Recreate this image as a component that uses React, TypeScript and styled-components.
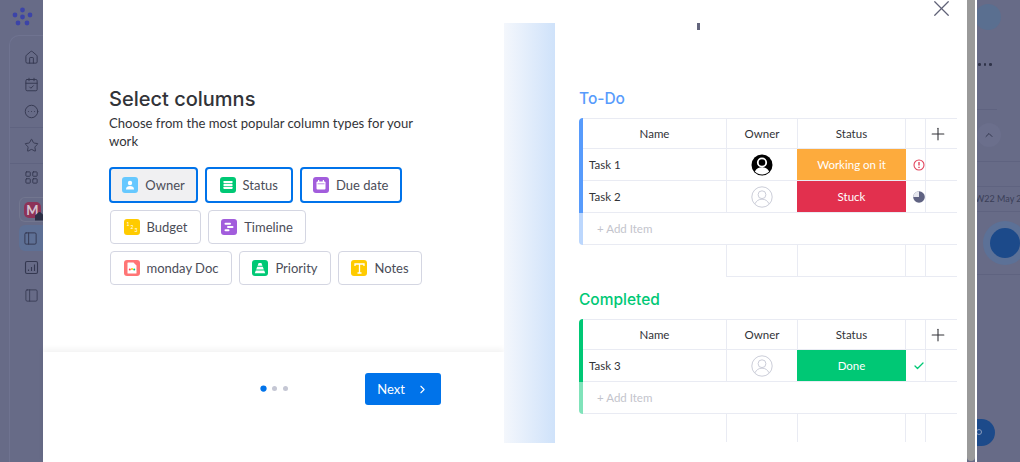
import React from 'react';
import styled, { createGlobalStyle } from 'styled-components';
import {
  Home,
  CalendarCheck,
  CircleEllipsis,
  Star,
  LayoutGrid,
  PanelLeft,
  X,
  Plus,
  ChevronRight,
  ChevronUp,
  Check,
} from 'lucide-react';

const GlobalStyle = createGlobalStyle`
  html, body {
    margin: 0;
    padding: 0;
    width: 1020px;
    height: 462px;
    overflow: hidden;
    font-family: "Lato", "Liberation Sans", sans-serif;
  }
  * { box-sizing: border-box; }
`;

const Page = styled.div`
  display: flex;
  width: 1020px;
  height: 462px;
  overflow: hidden;
  background: #676b87;
`;

const Sidebar = styled.nav`
  width: 43px;
  flex: none;
  display: flex;
  flex-direction: column;
  color: #343850;
`;

const Logo = styled.div`
  height: 35px;
  padding: 7px 0 0 12px;
`;

const SidePanel = styled.div`
  flex: 1;
  margin-left: 9px;
  border-top: 1px solid #6f7390;
  border-left: 1px solid #6f7390;
  border-top-left-radius: 10px;
  display: flex;
  flex-direction: column;
`;

const SideGroup = styled.div<{ $compact?: boolean }>`
  height: ${(p) => (p.$compact ? '36px' : '92px')};
  padding-top: ${(p) => (p.$compact ? '4px' : '8px')};
  border-bottom: 1px solid #5f6380;
`;

const SideList = styled.div`
  display: flex;
  flex-direction: column;
  gap: 3px;
  & > :last-child {
    margin-top: -1px;
  }
`;

const SideItem = styled.div<{ $active?: boolean; $tile?: boolean; $tall?: boolean }>`
  height: ${(p) => (p.$tile ? '25px' : p.$tall ? '27px' : '26px')};
  margin-top: ${(p) => (p.$tile ? '4px' : '0')};
  margin-left: ${(p) => (p.$active || p.$tile ? '9px' : '0')};
  padding-left: ${(p) => (p.$active || p.$tile ? '4px' : '14px')};
  display: flex;
  align-items: center;
  background: ${(p) => (p.$active ? '#5e7095' : 'transparent')};
  border-radius: 6px 0 0 6px;
  border: ${(p) => (p.$tile ? '1px solid #72768f' : 'none')};
  border-right: none;
`;

const Tile = styled.div`
  position: relative;
  width: 17px;
  height: 16px;
  border-radius: 5px;
  background: #8d3358;
  color: #d3c3cf;
  font-size: 13px;
  font-weight: 700;
  line-height: 16px;
  text-align: center;
`;

const TileBadge = styled.span`
  position: absolute;
  right: -3px;
  bottom: -3px;
  width: 9px;
  height: 9px;
  background: #2c3046;
  clip-path: polygon(50% 0, 100% 45%, 100% 100%, 0 100%, 0 45%);
`;

const Modal = styled.main`
  position: relative;
  width: 924px;
  flex: none;
  display: flex;
  background: #fff;
`;

const LeftPane = styled.section`
  width: 461px;
  flex: none;
  display: flex;
  flex-direction: column;
`;

const Intro = styled.div`
  height: 352px;
  padding: 87px 70px 0 66px;
`;

const Title = styled.h1`
  margin: 0;
  font-family: "Inter", "Liberation Sans", sans-serif;
  font-size: 20px;
  line-height: 24px;
  font-weight: 500;
  color: #323338;
`;

const Subtitle = styled.p`
  margin: 3px 0 17px;
  font-size: 13.1px;
  line-height: 18px;
  color: #323338;
`;

const ChipRows = styled.div`
  display: flex;
  flex-direction: column;
  gap: 6px;
`;

const ChipRow = styled.div<{ $indent?: boolean }>`
  display: flex;
  gap: 7px;
  padding-left: ${(p) => (p.$indent ? '1px' : '0')};
  margin-top: ${(p) => (p.$indent ? '1px' : '0')};
`;

const Chip = styled.div<{ $selected?: boolean; $pressed?: boolean; $width: number }>`
  width: ${(p) => p.$width}px;
  height: ${(p) => (p.$selected ? 36 : 34)}px;
  display: flex;
  align-items: center;
  justify-content: center;
  gap: 7px;
  border-radius: 4px;
  border: ${(p) => (p.$selected ? '2px solid #0073ea' : '1.5px solid #d4d6e2')};
  background: ${(p) => (p.$pressed ? '#f0f0f2' : '#fff')};
  font-size: 13px;
  color: #4b4d58;
`;

const ChipIcon = styled.span<{ $color: string }>`
  width: 16px;
  height: 16px;
  flex: none;
  border-radius: 3px;
  background: ${(p) => p.$color};
  display: flex;
  align-items: center;
  justify-content: center;
`;

const Footer = styled.div`
  flex: 1;
  display: flex;
  align-items: flex-start;
  padding: 21px 0 0 218px;
  box-shadow: 0 -3px 6px rgba(0, 0, 0, 0.05);
`;

const Dots = styled.div`
  display: flex;
  gap: 6px;
  margin-top: 13px;
  width: 104px;
`;

const Dot = styled.span<{ $on?: boolean }>`
  width: 5px;
  height: 5px;
  border-radius: 50%;
  background: ${(p) => (p.$on ? '#0073ea' : '#c5c7d4')};
  transform: ${(p) => (p.$on ? 'scale(1.25)' : 'none')};
`;

const NextButton = styled.button`
  width: 76px;
  height: 32px;
  display: flex;
  align-items: center;
  justify-content: center;
  gap: 11px;
  border: none;
  border-radius: 3px;
  background: #0073ea;
  color: #fff;
  font: inherit;
  font-size: 13px;
`;

const RightPane = styled.section`
  position: relative;
  flex: 1;
  display: flex;
  background: #fff;
`;

const Strip = styled.div`
  width: 51px;
  height: 420px;
  margin-top: 23px;
  flex: none;
  background: linear-gradient(90deg, #f4f7fc 0%, #cfe2fa 100%);
`;

const Boards = styled.div`
  width: 378px;
  margin-left: 24px;
  padding-top: 89px;
  display: flex;
  flex-direction: column;
`;

const GroupTitle = styled.h2<{ $color: string }>`
  margin: 0 0 9px;
  height: 20px;
  font-family: "Inter", "Liberation Sans", sans-serif;
  font-size: 15.5px;
  line-height: 20px;
  font-weight: 500;
  color: ${(p) => p.$color};
`;

const Group = styled.div`
  margin-bottom: 13px;
`;

const TableCard = styled.div`
  display: flex;
`;

const Edge = styled.div`
  width: 4px;
  flex: none;
  display: flex;
  flex-direction: column;
  align-self: flex-start;
  border-radius: 4px 0 0 4px;
  overflow: hidden;
`;

const EdgePart = styled.span<{ $color: string; $height: number }>`
  height: ${(p) => p.$height}px;
  background: ${(p) => p.$color};
`;

const Rows = styled.div`
  flex: 1;
`;

const Row = styled.div<{ $height?: number }>`
  display: grid;
  grid-template-columns: 144px 71px 108px 20px 31px;
  height: ${(p) => p.$height ?? 32}px;
`;

const Cell = styled.div<{ $left?: boolean; $noRight?: boolean; $top?: boolean }>`
  display: flex;
  align-items: center;
  justify-content: ${(p) => (p.$left ? 'flex-start' : 'center')};
  padding-left: ${(p) => (p.$left ? '6px' : '0')};
  font-size: 11.5px;
  color: #323338;
  border-right: ${(p) => (p.$noRight ? 'none' : '1.5px solid #e9ebf3')};
  border-bottom: 1.5px solid #e9ebf3;
  border-top: ${(p) => (p.$top ? '1.5px solid #e9ebf3' : 'none')};
`;

const StatusCell = styled.div<{ $fill: string }>`
  margin-left: -1px;
  display: flex;
  align-items: center;
  justify-content: center;
  font-size: 11.5px;
  color: #fff;
  background: ${(p) => p.$fill};
  border-bottom: 1.5px solid #e9ebf3;
`;

const MarkCell = styled(Cell)`
  justify-content: flex-start;
  padding-left: 7px;
  overflow: hidden;
`;

const PlusCell = styled(Cell)`
  justify-content: flex-start;
  padding-left: 2px;
`;

const AddItem = styled.div`
  height: 32px;
  padding: 0 0 0 14px;
  display: flex;
  align-items: center;
  font-size: 11.5px;
  color: #c3c4cc;
  border-bottom: 1.5px solid #e9ebf3;
`;

const Gap = styled.div<{ $bottom?: boolean; $noRight?: boolean }>`
  border-right: ${(p) => (p.$noRight ? 'none' : '1.5px solid #e9ebf3')};
  border-bottom: ${(p) => (p.$bottom ? '1.5px solid #e9ebf3' : 'none')};
`;

const CloseButton = styled.span`
  position: absolute;
  top: -5px;
  right: 12px;
  color: #5f6176;
  display: flex;
`;

const Tick = styled.span`
  position: absolute;
  top: 23px;
  left: 193px;
  width: 3px;
  height: 7px;
  background: #63657c;
`;

const Scrollbar = styled.div`
  width: 8px;
  flex: none;
  height: 461px;
  background: #9a9a9a;
  border-radius: 0 0 4px 4px;
`;

const ScrollEdge = styled.div`
  width: 2px;
  flex: none;
  background: #fff;
`;

const Rail = styled.aside`
  position: relative;
  flex: 1;
  overflow: hidden;
  color: #33374f;
  display: flex;
  flex-direction: column;
`;

const Avatar = styled.div`
  width: 26px;
  height: 26px;
  margin: 4px 0 0 -2px;
  flex: none;
  border-radius: 50%;
  background: #5a6f90;
`;

const More = styled.div`
  margin: 33px 0 0 1px;
  height: 2px;
  display: flex;
  gap: 3px;
`;

const MoreDot = styled.span`
  width: 2.5px;
  height: 2.5px;
  border-radius: 50%;
  background: #2f3349;
`;

const RailLine = styled.div<{ $top: number; $width?: number }>`
  margin-top: ${(p) => p.$top}px;
  width: ${(p) => p.$width ?? 43}px;
  height: 1px;
  flex: none;
  background: #5f6380;
`;

const Collapse = styled.div`
  margin-top: 13px;
  width: 24px;
  height: 24px;
  flex: none;
  border-radius: 50%;
  background: #6b6f8c;
  display: flex;
  align-items: center;
  justify-content: center;
`;

const WeekLabel = styled.div`
  height: 24px;
  margin-left: -2px;
  font-size: 9px;
  line-height: 24px;
  white-space: nowrap;
  color: #3a3e57;
`;

const Halo = styled.div`
  margin: 9px 0 0 6px;
  width: 44px;
  height: 44px;
  flex: none;
  border-radius: 50%;
  background: #5c7197;
  display: flex;
  align-items: center;
  justify-content: center;
`;

const HaloCore = styled.div`
  width: 30px;
  height: 30px;
  border-radius: 50%;
  background: #1c4a8a;
`;

const Fab = styled.div`
  position: absolute;
  left: -15px;
  top: 419px;
  width: 33px;
  height: 27px;
  padding: 10px 0 0 14px;
  border-radius: 14px;
  background: #1c4a8a;
`;

const FabRing = styled.span`
  display: block;
  width: 6px;
  height: 6px;
  border-radius: 50%;
  border: 1px solid #8a9cbc;
`;

const MondayLogo = () => (
  <svg width="21" height="20" viewBox="0 0 21 20" fill="#3c44a8">
    <circle cx="10.5" cy="3" r="2.4" />
    <circle cx="3" cy="8" r="2.4" />
    <circle cx="18" cy="8" r="2.4" />
    <circle cx="10.5" cy="10" r="2.4" />
    <circle cx="6" cy="16" r="2.4" />
    <circle cx="15" cy="16" r="2.4" />
  </svg>
);

const ChartBox = () => (
  <svg width="15" height="15" viewBox="0 0 15 15" fill="none" stroke="currentColor" strokeWidth="1.1">
    <rect x="1.500" y="1.500" width="12" height="12" rx="1.500" />
    <path d="M4.500 11V9.500M7.500 11V7M10.500 11V4.500" />
  </svg>
);

const UserFilled = () => (
  <svg width="22" height="22" viewBox="0 0 22 22">
    <circle cx="11" cy="11" r="10.5" fill="#000" />
    <circle cx="11" cy="8.5" r="4.2" fill="none" stroke="#fff" strokeWidth="1.8" />
    <path d="M3.8 17.5c1.6-3 4-4.2 7.2-4.2s5.6 1.2 7.2 4.2c-2 1.9-4.4 3-7.2 3s-5.2-1.1-7.2-3z" fill="#fff" />
  </svg>
);

const UserEmpty = () => (
  <svg width="22" height="22" viewBox="0 0 22 22" fill="none" stroke="#c5c7d4" strokeWidth="0.9">
    <circle cx="11" cy="11" r="10.2" />
    <circle cx="11" cy="8.7" r="3.9" />
    <path d="M4 17.8c1.3-3 3.8-4.6 7-4.6s5.7 1.6 7 4.6" />
  </svg>
);

const AlertMark = () => (
  <svg width="12" height="12" viewBox="0 0 12 12" fill="none" stroke="#e2445c" strokeWidth="1.1">
    <circle cx="6" cy="6" r="5" />
    <path d="M6 3v3.600M6 7.800v1.100" strokeWidth="1.400" />
  </svg>
);

const PieMark = () => (
  <svg width="12" height="12" viewBox="0 0 12 12">
    <circle cx="6" cy="6" r="5.8" fill="#5f6282" />
    <path d="M6 6V0.2A5.8 5.8 0 0 0 0.2 6z" fill="#e6e7ee" />
  </svg>
);

const ownerGlyph = (
  <svg width="10" height="10" viewBox="0 0 10 10" fill="#fff">
    <circle cx="5" cy="3" r="2.2" />
    <path d="M1 9.500c0-2.400 1.800-3.400 4-3.400s4 1 4 3.400z" />
  </svg>
);
const statusGlyph = (
  <svg width="10" height="10" viewBox="0 0 10 10" fill="#fff">
    <rect x="0.5" y="1" width="9" height="2.2" rx="0.4" />
    <rect x="0.5" y="3.9" width="9" height="2.2" rx="0.4" />
    <rect x="0.5" y="6.8" width="9" height="2.2" rx="0.4" />
  </svg>
);
const dateGlyph = (
  <svg width="10" height="10" viewBox="0 0 10 10" fill="#fff">
    <rect x="0.5" y="1.5" width="9" height="8" rx="1" />
    <rect x="2" y="0" width="1.2" height="2.5" />
    <rect x="6.8" y="0" width="1.2" height="2.5" />
    <rect x="1.5" y="3.5" width="7" height="0.7" fill="#a25ddc" />
  </svg>
);
const budgetGlyph = (
  <svg width="14" height="14" viewBox="0 0 14 14" fill="#fff" fontSize="5" fontFamily="Lato, sans-serif">
    <text x="1.500" y="5.500">1</text>
    <text x="5.500" y="8.500">2</text>
    <text x="9.500" y="11.500">3</text>
  </svg>
);
const timelineGlyph = (
  <svg width="10" height="10" viewBox="0 0 10 10" fill="#fff">
    <rect x="0.5" y="0.8" width="6.5" height="2" rx="1" />
    <rect x="3" y="4" width="6.5" height="2" rx="1" />
    <rect x="0.5" y="7.2" width="5" height="2" rx="1" />
  </svg>
);
const docGlyph = (
  <svg width="10" height="12" viewBox="0 0 10 12">
    <path d="M0.5 1a.6.6 0 0 1 .6-.6h5.400l3 3v7.600a.6.6 0 0 1-.6.6H1.100a.6.6 0 0 1-.6-.6z" fill="#fff" />
    <circle cx="2.8" cy="7.600" r="1" fill="#ff3d57" />
    <circle cx="5" cy="7" r="1" fill="#ffcb00" />
    <circle cx="7.200" cy="7.600" r="1" fill="#00c875" />
  </svg>
);
const priorityGlyph = (
  <svg width="12" height="12" viewBox="0 0 12 12" fill="#fff">
    <path d="M4.600 1h2.800l1 2.800H3.600z" />
    <path d="M3.200 4.700h5.600l1 2.800H2.200z" />
    <path d="M1.800 8.400h8.400l1 2.800H.8z" />
  </svg>
);
const notesGlyph = (
  <svg width="11" height="11" viewBox="0 0 11 11" fill="none" stroke="#fff" strokeWidth="1.3">
    <path d="M1 3V1h9v2M5.500 1v9M3.500 10h4" />
  </svg>
);

const chipRows = [
  [
    { label: 'Owner', color: '#66c8ff', glyph: ownerGlyph, width: 89, selected: true, pressed: true },
    { label: 'Status', color: '#00c875', glyph: statusGlyph, width: 87.5, selected: true },
    { label: 'Due date', color: '#a25ddc', glyph: dateGlyph, width: 102.5, selected: true },
  ],
  [
    { label: 'Budget', color: '#ffcb00', glyph: budgetGlyph, width: 91 },
    { label: 'Timeline', color: '#a25ddc', glyph: timelineGlyph, width: 98 },
  ],
  [
    { label: 'monday Doc', color: '#ff7575', glyph: docGlyph, width: 122 },
    { label: 'Priority', color: '#00c875', glyph: priorityGlyph, width: 92 },
    { label: 'Notes', color: '#ffcb00', glyph: notesGlyph, width: 84 },
  ],
];

type Task = {
  name: string;
  owner: 'filled' | 'empty';
  status: string;
  fill: string;
  mark: React.ReactNode;
};

const todo: Task[] = [
  { name: 'Task 1', owner: 'filled', status: 'Working on it', fill: '#fdab3d', mark: <AlertMark /> },
  { name: 'Task 2', owner: 'empty', status: 'Stuck', fill: '#e2304e', mark: <PieMark /> },
];

const done: Task[] = [
  { name: 'Task 3', owner: 'empty', status: 'Done', fill: '#00c875', mark: <Check size={12} strokeWidth={2.6} color="#00c875" /> },
];

const Board = ({
  title,
  color,
  soft,
  tasks,
  closed,
}: {
  title: string;
  color: string;
  soft: string;
  tasks: Task[];
  closed: boolean;
}) => (
  <Group>
    <GroupTitle $color={color}>{title}</GroupTitle>
    <TableCard>
      <Edge>
        <EdgePart $color={color} $height={31 + tasks.length * 32} />
        <EdgePart $color={soft} $height={32} />
      </Edge>
      <Rows>
        <Row $height={31}>
          <Cell $top>Name</Cell>
          <Cell $top>Owner</Cell>
          <Cell $top>Status</Cell>
          <Cell $top />
          <PlusCell $top $noRight>
            <Plus size={20} strokeWidth={1.3} color="#323338" />
          </PlusCell>
        </Row>
        {tasks.map((task) => (
          <Row key={task.name}>
            <Cell $left>{task.name}</Cell>
            <Cell>{task.owner === 'filled' ? <UserFilled /> : <UserEmpty />}</Cell>
            <StatusCell $fill={task.fill}>{task.status}</StatusCell>
            <MarkCell>{task.mark}</MarkCell>
            <Cell $noRight />
          </Row>
        ))}
        <AddItem>+ Add Item</AddItem>
        <Row $height={closed ? 32 : 28}>
          <Gap />
          <Gap $bottom={closed} />
          <Gap $bottom={closed} />
          <Gap $bottom={closed} />
          <Gap $bottom={closed} $noRight />
        </Row>
      </Rows>
    </TableCard>
  </Group>
);

const App = () => (
  <Page>
    <GlobalStyle />
    <Sidebar>
      <Logo>
        <MondayLogo />
      </Logo>
      <SidePanel>
        <SideGroup>
          <SideItem $tall><Home size={15} strokeWidth={1.5} /></SideItem>
          <SideItem $tall><CalendarCheck size={15} strokeWidth={1.5} /></SideItem>
          <SideItem $tall><CircleEllipsis size={15} strokeWidth={1.5} /></SideItem>
        </SideGroup>
        <SideGroup $compact>
          <SideItem $tall><Star size={15} strokeWidth={1.5} /></SideItem>
        </SideGroup>
        <SideList>
          <SideItem><LayoutGrid size={15} strokeWidth={1.5} /></SideItem>
          <SideItem $tile>
            <Tile>M<TileBadge /></Tile>
          </SideItem>
          <SideItem $active><PanelLeft size={15} strokeWidth={1.5} /></SideItem>
          <SideItem><ChartBox /></SideItem>
          <SideItem><PanelLeft size={15} strokeWidth={1.3} /></SideItem>
        </SideList>
      </SidePanel>
    </Sidebar>

    <Modal>
      <LeftPane>
        <Intro>
          <Title>Select columns</Title>
          <Subtitle>Choose from the most popular column types for your work</Subtitle>
          <ChipRows>
            {chipRows.map((row, i) => (
              <ChipRow key={row[0].label} $indent={i > 0}>
                {row.map((chip) => (
                  <Chip key={chip.label} $width={chip.width} $selected={chip.selected} $pressed={chip.pressed}>
                    <ChipIcon $color={chip.color}>{chip.glyph}</ChipIcon>
                    {chip.label}
                  </Chip>
                ))}
              </ChipRow>
            ))}
          </ChipRows>
        </Intro>
        <Footer>
          <Dots>
            <Dot $on />
            <Dot />
            <Dot />
          </Dots>
          <NextButton>
            Next
            <ChevronRight size={13} />
          </NextButton>
        </Footer>
      </LeftPane>
      <RightPane>
        <Strip />
        <Boards>
          <Board title="To-Do" color="#579bfc" soft="#bcd7fd" tasks={todo} closed />
          <Board title="Completed" color="#00c875" soft="#80e3ba" tasks={done} closed={false} />
        </Boards>
        <Tick />
        <CloseButton>
          <X size={27} strokeWidth={1.1} />
        </CloseButton>
      </RightPane>
    </Modal>
    <Scrollbar />
    <ScrollEdge />
    <Rail>
      <Avatar />
      <More>
        <MoreDot />
        <MoreDot />
        <MoreDot />
      </More>
      <RailLine $top={44} $width={20} />
      <Collapse>
        <ChevronUp size={12} />
      </Collapse>
      <RailLine $top={14} />
      <RailLine $top={24} />
      <WeekLabel>W22 May 2</WeekLabel>
      <RailLine $top={0} />
      <Halo>
        <HaloCore />
      </Halo>
      <RailLine $top={9} />
      <Fab>
        <FabRing />
      </Fab>
    </Rail>
  </Page>
);

export default App;
